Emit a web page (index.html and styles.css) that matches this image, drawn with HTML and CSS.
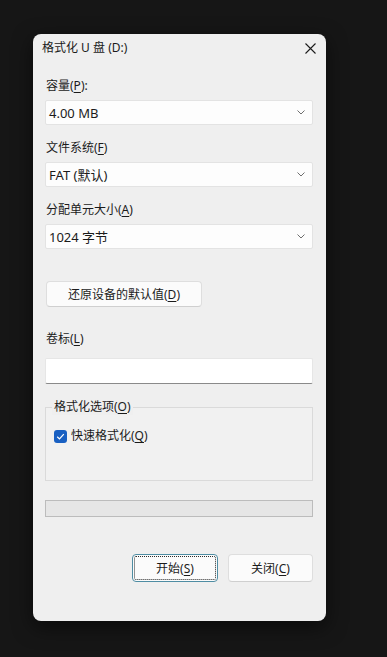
FILE: index.html
```html
<html>
    <head>
        <link rel="stylesheet" href="styles.css">
    </head>
    <body>
        <div class="dialog">
            <div class="titlebar">
                <span class="title">格式化 U 盘 (D:)</span>
                <svg class="close" width="11" height="11" viewBox="0 0 11 11">
                    <path d="M0.5 0.5 L10.5 10.5 M10.5 0.5 L0.5 10.5" stroke="#1c1c1c" stroke-width="1.1" fill="none"/>
                </svg>
            </div>
            <div class="content">
                <div class="label first">容量(<u>P</u>):</div>
                <div class="select">
                    <span>4.00 MB</span>
                    <svg class="chevron" width="8" height="5" viewBox="0 0 8 5"><path d="M0.5 0.5 L4 4 L7.5 0.5" stroke="#6e6e6e" fill="none"/></svg>
                </div>
                <div class="label">文件系统(<u>F</u>)</div>
                <div class="select">
                    <span>FAT (默认)</span>
                    <svg class="chevron" width="8" height="5" viewBox="0 0 8 5"><path d="M0.5 0.5 L4 4 L7.5 0.5" stroke="#6e6e6e" fill="none"/></svg>
                </div>
                <div class="label">分配单元大小(<u>A</u>)</div>
                <div class="select">
                    <span>1024 字节</span>
                    <svg class="chevron" width="8" height="5" viewBox="0 0 8 5"><path d="M0.5 0.5 L4 4 L7.5 0.5" stroke="#6e6e6e" fill="none"/></svg>
                </div>
                <button class="btn reset">还原设备的默认值(<u>D</u>)</button>
                <div class="label volume">卷标(<u>L</u>)</div>
                <div class="textbox"></div>
                <fieldset class="options">
                    <legend>格式化选项(<u>O</u>)</legend>
                    <div class="check-row">
                        <span class="checkbox">
                            <svg width="13" height="13" viewBox="0 0 13 13"><path d="M3.2 6.8 L5.5 9 L9.8 4.2" stroke="#fff" stroke-width="1.2" fill="none"/></svg>
                        </span>
                        <span>快速格式化(<u>Q</u>)</span>
                    </div>
                </fieldset>
                <div class="progress"></div>
                <div class="actions">
                    <button class="btn start">开始(<u>S</u>)</button>
                    <button class="btn close-btn">关闭(<u>C</u>)</button>
                </div>
            </div>
        </div>
    </body>
</html>
```

FILE: styles.css
```css
body {
    margin: 0;
    background: #161616;
    font-family: "Noto Sans", "Noto Sans CJK SC", sans-serif;
    font-size: 12px;
    color: #1b1b1b;
}
u {
    text-decoration-thickness: 1px;
    text-underline-offset: 2px;
}
.dialog {
    margin: 34px 0 0 33px;
    width: 293px;
    height: 587px;
    background: #efefef;
    border-radius: 8px;
    box-shadow: 0 6px 20px rgba(0, 0, 0, 0.55);
}
.titlebar {
    height: 28px;
    display: flex;
    align-items: center;
    justify-content: space-between;
    padding: 0 10px 0 9px;
}
.title {
    line-height: 16px;
}
.content {
    padding: 0 13px 0 12px;
}
.label {
    line-height: 16px;
    margin-top: 15px;
    padding-left: 1px;
}
.label.first {
    margin-top: 16px;
}
.label.volume {
    margin-top: 24px;
}
.select {
    margin-top: 6px;
    height: 25px;
    box-sizing: border-box;
    background: #fdfdfd;
    border: 1px solid #e3e3e3;
    border-radius: 2px;
    display: flex;
    align-items: center;
    justify-content: space-between;
    padding: 0 7px 0 3px;
    font-size: 13px;
}
.btn {
    font-family: inherit;
    font-size: 12px;
    color: #1b1b1b;
    background: #fbfbfb;
    border: 1px solid #dedede;
    border-bottom-color: #cfcfcf;
    border-radius: 4px;
    padding: 0;
    box-sizing: border-box;
}
.reset {
    display: block;
    margin-top: 32px;
    margin-left: 1px;
    width: 156px;
    height: 26px;
}
.textbox {
    margin-top: 11px;
    height: 26px;
    box-sizing: border-box;
    background: #ffffff;
    border: 1px solid #e6e6e6;
    border-bottom: 1px solid #8a8a8a;
    border-radius: 2px;
}
.options {
    margin: 15px 0 0 0;
    padding: 13px 8px 36px 8px;
    border: 1px solid #dadada;
    background: #f1f1f1;
}
.options legend {
    padding: 0 2px;
    margin-left: -2px;
    line-height: 16px;
    background: #efefef;
}
.check-row {
    display: flex;
    align-items: center;
    gap: 4px;
    line-height: 16px;
}
.checkbox {
    width: 13px;
    height: 13px;
    background: #1960c2;
    border-radius: 3px;
    display: flex;
}
.progress {
    margin-top: 19px;
    height: 17px;
    box-sizing: border-box;
    background: #e6e6e6;
    border: 1px solid #bcbcbc;
}
.actions {
    margin-top: 37px;
    display: flex;
    justify-content: flex-end;
    gap: 10px;
}
.actions .btn {
    height: 28px;
    width: 85px;
}
.actions .start {
    width: 86px;
    border: 1px solid #4f8da3;
    outline: 1px dotted #2b2b2b;
    outline-offset: -3px;
}
```
